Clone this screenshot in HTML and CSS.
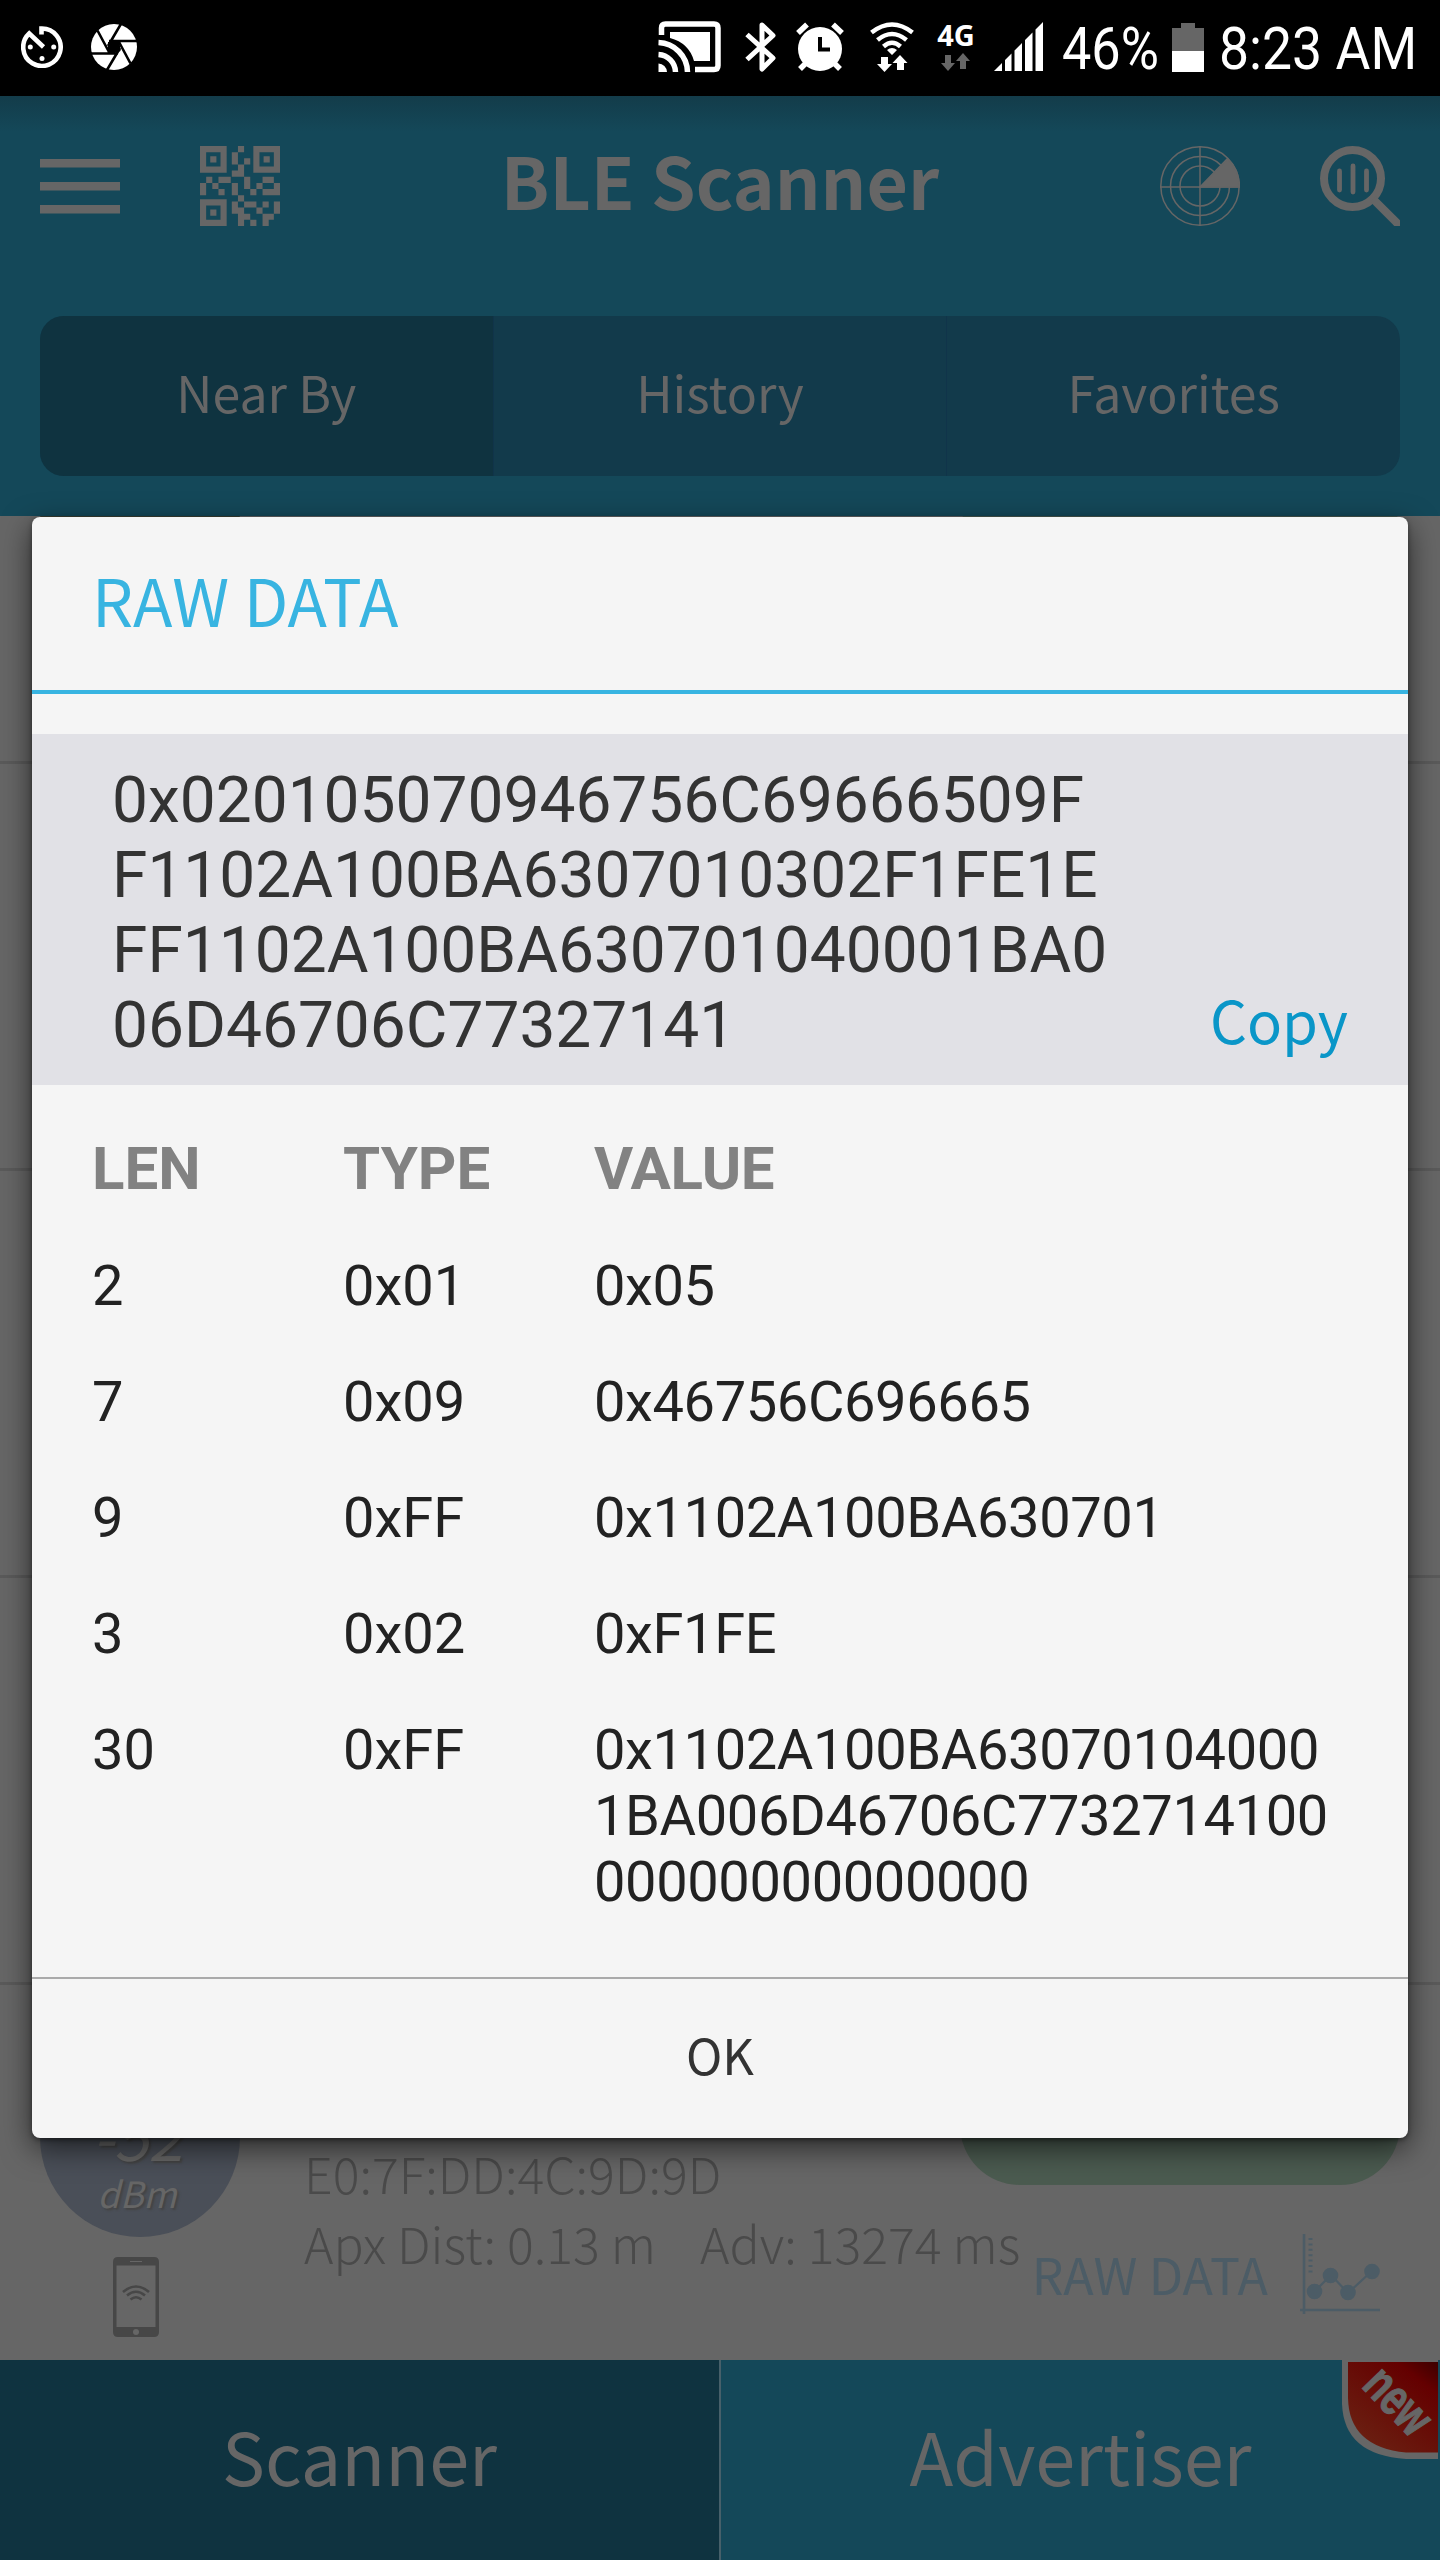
FILE: index.html
```html
<!DOCTYPE html>
<html lang="en">
<head>
  <meta charset="UTF-8" />
  <meta name="viewport" content="width=device-width, initial-scale=1" />
  <title>BLE Scanner</title>
  <link rel="stylesheet" href="styles.css">
</head>
<body>

  <div class="status-bar">
    <div class="status-left">
      <svg width="42" height="42" viewBox="0 0 42 42" fill="none" stroke="#fff">
        <path d="M20.5 8.5V2.5A18.7 18.7 0 1 1 8.2 7.5L22.5 21" stroke-width="4.6"/>
        <g fill="#fff" stroke="none"><circle cx="9.3" cy="21" r="2.5"/><circle cx="32.7" cy="21" r="2.5"/><circle cx="21" cy="32.5" r="2.5"/></g>
      </svg>
      <svg width="46" height="46" viewBox="0 0 46 46">
        <circle cx="23" cy="23" r="23" fill="#fff"/>
        <path d="M17 18L28.500 17 29.500 27 24 29 17 29z" fill="#000"/>
        <path d="M6.500 6.500L18 28M30.500-1L17 22M46 17H18M39.500 39.500L28 18M16 46L29 24M0 29.500H27" stroke="#000" stroke-width="2.6"/>
      </svg>
    </div>
    <div class="status-right">
      <svg class="cast" width="64" height="52" viewBox="0 0 64 52" fill="none" stroke="#fff" stroke-width="5.500">
        <path d="M3.500 14V7q0-4 4-4H56q4 0 4 4V44.500q0 4-4 4H37"/>
        <path d="M12 11H52V40H36Q31 22 12 17z" fill="#fff" stroke="none"/>
        <path d="M.5 21.500A30 30 0 0 1 29.500 51M.5 33.500A18 18 0 0 1 17.500 51"/>
        <path d="M.5 42.500A9 9 0 0 1 9 51H.5z" fill="#fff" stroke="none"/>
      </svg>
      <svg class="bt" width="34" height="52" viewBox="0 0 34 52" fill="none" stroke="#fff" stroke-width="5" stroke-linejoin="round">
        <path d="M3 13.500L29 37 18 48V4L29 14.500 3 38.500"/>
      </svg>
      <svg class="alarm" width="48" height="50" viewBox="0 0 48 50">
        <g stroke="#fff" stroke-width="5.500"><path d="M2 11L11 2.500M37 2.500L46 11M10 41L4 47M38 41L44 47"/></g>
        <circle cx="24" cy="27" r="22" fill="#fff"/>
        <path d="M24 15V27.500H34" fill="none" stroke="#000" stroke-width="4"/>
      </svg>
      <svg class="wifi" width="44" height="50" viewBox="0 0 44 50" fill="none" stroke="#fff" stroke-width="4.500">
        <path d="M1.500 10.500Q22-5.500 42.500 10.500M7.500 18Q22 6 36.500 18M13.500 24.500Q22 17 30.500 24.500"/>
        <path d="M17 28q5-4 10 0l-5 5zM11 35h7v7h4l-7.500 8L7 42h4zM27 48h7v-7h3.500L30 33l-7.500 8H27z" fill="#fff" stroke="none"/>
      </svg>
      <div class="network">
        <span>4G</span>
        <svg width="30" height="18" viewBox="0 0 30 18" fill="#666"><path d="M4 2h6v8h4l-7 8-7-8h4zM19 16h6V8h4l-7-8-7 8h4z"/></svg>
      </div>
      <svg class="signal" width="50" height="50" viewBox="0 0 50 50" fill="#fff">
        <path d="M0 49L8 41V49zM11 38L17.500 31.500V49H11zM20.500 28.500L28 21V49H20.500zM31 18L38.500 10.500V49H31zM41.500 7.500L49 0V49H41.500z"/>
      </svg>
      <span class="percent">46%</span>
      <svg class="battery" width="32" height="49" viewBox="0 0 32 49"><path d="M9 0H23V5H32V28H0V5H9z" fill="#666"/><path d="M0 28H32V49H0z" fill="#fff"/></svg>
      <span class="clock">8:23 AM</span>
    </div>
  </div>

  <div class="header">
    <div class="toolbar">
      <svg width="80" height="80" viewBox="0 0 80 80" fill="#666"><path d="M0 13H80V21.500H0zM0 36H80V44.500H0zM0 59H80V67.500H0z"/></svg>
      <svg class="qr" width="80" height="80" viewBox="0 0 39 39" fill="#666" fill-rule="evenodd">
        <path d="M0 0H13V13H0zM3 3V10H10V3zM5 5H8V8H5zM26 0H39V13H26zM29 3V10H36V3zM31 5H34V8H31zM0 26H13V39H0zM3 29V36H10V29zM5 31H8V34H5z"/>
        <path d="M18.500 0h3v3h-3zM15.500 3h3v6h-3zM21.500 6h3v3h-3zM18.500 9h3v6h-6v-3h3zM3 15h3v3H3zM9 15h6v3H9zM0 18h3v6H0zM6 18h3v3H6zM9 21h3v3H9zM15.500 18h3v6h-3zM21.500 15h3v6h-3zM24.500 21h3v3h-3zM27.500 18h3v3h-3zM30.500 15h5.500v3h-5.500zM36 18h3v6h-8.500v-3H36zM18.500 24h3v3h-3zM15.500 27h3v6h-3zM21.500 27h6v3h-6zM30.500 27h3v3h-3zM36 27h3v6h-3zM18.500 30h3v3h-3zM27.500 30h3v3h-3zM18.500 33h6v3h-3v3h-3zM24.500 36h3v3h-3zM30.500 33h5.500v3h-2.500v3h-3z"/>
      </svg>
      <h1>BLE Scanner</h1>
      <svg class="radar" width="80" height="80" viewBox="0 0 80 80" fill="none" stroke="#666" stroke-width="1.500">
        <circle cx="40" cy="40" r="39.200"/><circle cx="40" cy="40" r="29.500"/><circle cx="40" cy="40" r="20"/>
        <path d="M40 0V80M0 41H80"/>
        <path d="M40 41L67.500 12.500Q79.500 24 79.500 41z" fill="#666"/>
      </svg>
      <svg width="80" height="80" viewBox="0 0 80 80" fill="none" stroke="#666">
        <circle cx="32.500" cy="32.500" r="28.500" stroke-width="8"/>
        <path d="M19.500 25V44M33 20V46M46.500 25V44" stroke-width="4.800" stroke-linecap="round"/>
        <path d="M53 53L80 80" stroke-width="8"/>
      </svg>
    </div>
    <div class="tabs">
      <div class="tab active">Near By</div>
      <div class="tab">History</div>
      <div class="tab">Favorites</div>
    </div>
  </div>

  <div class="device-list">
    <div class="device cut">
      <div class="rssi near"></div>
      <div class="connect"></div>
    </div>
    <div class="device"></div>
    <div class="device"></div>
    <div class="device"></div>
    <div class="device last">
      <div class="left">
        <div class="rssi"><b>-52</b><i>dBm</i></div>
        <svg width="46" height="80" viewBox="0 0 46 80">
          <path d="M5 0H41q5 0 5 5V75q0 5-5 5H5q-5 0-5-5V5Q0 0 5 0zM3.500 8.500V70H42.500V8.500z" fill="#474747" fill-rule="evenodd"/>
          <path d="M17 4.500H29" stroke="#666"/><circle cx="23" cy="75" r="3" fill="#666"/>
          <path d="M10 35Q23 24 36 35M14 38.500Q23 31 32 38.500M17.500 42.500Q23 38 28.500 42.500" fill="none" stroke="#474747" stroke-width="2.600"/>
        </svg>
      </div>
      <div class="info">
        <div>E0:7F:DD:4C:9D:9D</div>
        <div class="dist"><span>Apx Dist: 0.13 m</span><span>Adv: 13274 ms</span></div>
      </div>
      <div class="right">
        <div class="connect"></div>
        <div class="raw">
          <span>RAW DATA</span>
          <svg width="80" height="80" viewBox="0 0 80 80" stroke="#4c5c66" fill="#4c5c66">
            <path d="M4 0V80M0 76H80" stroke-width="2.600"/>
            <path d="M10.500 4V40" stroke-width="4" stroke-dasharray="2 3.400"/>
            <path d="M15 57L31 41 48 59 72 37" fill="none" stroke-width="2.200"/>
            <g stroke="none"><circle cx="14.500" cy="57.500" r="7.800"/><circle cx="30.500" cy="41.500" r="7.800"/><circle cx="48" cy="58.500" r="7.800"/><circle cx="72" cy="37.500" r="7.800"/></g>
          </svg>
        </div>
      </div>
    </div>
  </div>

  <div class="bottom-nav">
    <div class="nav-item active">Scanner</div>
    <div class="nav-item">Advertiser
      <svg class="badge" width="97" height="100" viewBox="0 0 97 100">
        <defs>
          <linearGradient id="red" x1="1" y1="0" x2="0.300" y2="0.900">
            <stop offset="0" stop-color="#3c0000"/><stop offset="0.250" stop-color="#640000"/><stop offset="1" stop-color="#6a1d10"/>
          </linearGradient>
        </defs>
        <path d="M0 0H96V99H64Q2 95 0 44z" fill="#666"/>
        <path d="M6 2H96V92.500H64Q7 87 6 38z" fill="url(#red)"/>
        <text x="54" y="57" textLength="73" lengthAdjust="spacingAndGlyphs" transform="rotate(46 54 43)">new</text>
      </svg>
    </div>
  </div>

  <div class="dialog">
    <h2>RAW DATA</h2>
    <div class="payload">
      <p>0x020105070946756C69666509F<br>F1102A100BA6307010302F1FE1E<br>FF1102A100BA630701040001BA0<br>06D46706C77327141</p>
      <a class="copy">Copy</a>
    </div>
    <div class="records">
      <span class="th">LEN</span><span class="th">TYPE</span><span class="th">VALUE</span>
      <span>2</span><span>0x01</span><span>0x05</span>
      <span>7</span><span>0x09</span><span>0x46756C696665</span>
      <span>9</span><span>0xFF</span><span>0x1102A100BA630701</span>
      <span>3</span><span>0x02</span><span>0xF1FE</span>
      <span>30</span><span>0xFF</span><span>0x1102A100BA63070104000<br>1BA006D46706C7732714100<br>00000000000000</span>
    </div>
    <div class="ok">OK</div>
  </div>

</body>
</html>
```
FILE: styles.css
```css
* {
  box-sizing: border-box;
}

html, body {
  margin: 0; padding: 0;
}

body {
  position: relative;
  width: 1440px;
  height: 2560px;
  overflow: hidden;
  display: flex;
  flex-direction: column;
  background: #666;
  color: #666;
  font-family: 'Noto Sans CJK SC', sans-serif;
}

svg {
  display: block;
  flex-shrink: 0;
}

/* Status bar */
.status-bar {
  height: 96px;
  flex-shrink: 0;
  background: #000;
  color: #fff;
  display: flex;
  justify-content: space-between;
  padding: 0 25px 0 21px;
  font-family: Roboto, sans-serif;
}

.status-left {
  display: flex;
  align-items: center;
  gap: 28px;
  padding-bottom: 2px;
}

.status-right {
  display: flex;
  align-items: center;
  padding-bottom: 2px;
}

.bt { margin-left: 22px; }
.alarm { margin-left: 18px; }
.wifi { margin-left: 26px; }
.signal { margin-left: 18px; }
.battery { margin-left: 14px; }

.network {
  width: 40px;
  height: 48px;
  margin-left: 22px;
  display: flex;
  flex-direction: column;
  align-items: center;
  justify-content: space-between;
  font: bold 29px/24px 'Noto Sans', sans-serif;
}

.percent, .clock {
  font-size: 60px;
  line-height: 70px;
  padding-top: 3px;
  white-space: nowrap;
  transform: scaleX(0.87);
}

.percent {
  width: 96px;
  margin-left: 18px;
  transform-origin: left;
}

.clock {
  width: 196px;
  margin-left: 15px;
  transform: scaleX(0.892);
  transform-origin: left;
}

/* Header */
.header {
  height: 420px;
  flex-shrink: 0;
  padding: 50px 40px 0;
  background: linear-gradient(#133c4a, #144859 36px);
  position: relative;
  z-index: 1;
}

.toolbar {
  display: flex;
  align-items: center;
  height: 80px;
}

.qr { margin-left: 80px; }
.radar { margin-right: 80px; }

h1 {
  flex: 1;
  margin: 0;
  padding-bottom: 14px;
  text-align: center;
  font-size: 71.500px;
  line-height: 80px;
  font-weight: 700;
}

.tabs {
  display: flex;
  height: 160px;
  margin-top: 90px;
  border-radius: 24px;
  overflow: hidden;
  background: #123a4b;
}

.tab {
  flex: 1;
  text-align: center;
  font-size: 50px;
  line-height: 150px;
  border-left: 1px solid #10344a;
}

.tab.active {
  background: #0f3340;
  border-left: none;
}

/* Device list */
.device-list {
  flex: 1;
  min-height: 0;
  margin-top: -157px;
}

.device {
  height: 407px;
  border-bottom: 3px solid #5a5a5a;
}

.cut {
  height: 405px;
  padding: 52px 40px 0;
  display: flex;
  justify-content: space-between;
}

.cut .connect {
  margin-top: 28px;
}

.last {
  display: flex;
  border: none;
  height: 375px;
}

.left {
  width: 200px;
  margin: 52px 0 0 40px;
  display: flex;
  flex-direction: column;
  align-items: center;
}

.left svg {
  margin: 20px 8px 0 0;
}

.rssi {
  width: 200px;
  height: 200px;
  border-radius: 50%;
  background: #4a4f58;
  text-align: center;
  font-style: italic;
  text-shadow: 2px 2px 2px #444;
}

.rssi.near {
  background: #3c4033;
}

.rssi b {
  display: block;
  font-weight: 400;
  font-size: 62px;
  line-height: 62px;
  padding: 66px 5px 0 0;
}

.rssi i {
  display: block;
  padding-right: 6px;
  font-size: 36px;
  line-height: 54px;
}

.info {
  width: 720px;
  margin: 152px 0 0 64px;
  color: #4a4a4a;
  font-size: 50px;
  line-height: 70px;
  font-weight: 300;
  white-space: nowrap;
}

.dist {
  display: flex;
  gap: 44px;
}

.right {
  margin-top: 80px;
  margin-left: -64px;
}

.connect {
  width: 440px;
  height: 120px;
  border-radius: 60px;
  background: #4b5b50;
}

.raw {
  display: flex;
  align-items: center;
  justify-content: flex-end;
  gap: 32px;
  margin: 49px 20px 0 0;
  color: #4c5c66;
  font-size: 50px;
  line-height: 76px;
}

.raw span {
  padding-bottom: 3px;
}

/* Bottom navigation */
.bottom-nav {
  height: 200px;
  flex-shrink: 0;
  display: flex;
  position: relative;
}

.nav-item {
  flex: 1;
  text-align: center;
  font-size: 72px;
  line-height: 190px;
  background: #144859;
  position: relative;
}

.nav-item.active {
  background: #0f3340;
  border-right: 2px solid #47606a;
}

.badge {
  position: absolute;
  top: 0;
  right: 1px;
}

.badge text {
  fill: #666;
  stroke: #666;
  stroke-width: 1.2px;
  font: bold 52px/1 'Liberation Sans', sans-serif;
  text-anchor: middle;
}

/* Raw data dialog */
.dialog {
  position: absolute;
  z-index: 2;
  left: 32px;
  top: 517px;
  width: 1376px;
  height: 1621px;
  display: flex;
  flex-direction: column;
  background: #f5f5f5;
  border-radius: 8px;
  box-shadow: 0 10px 30px rgba(0,0,0,0.6), 0 2px 5px rgba(0,0,0,0.4);
  overflow: hidden;
  font-family: Roboto, sans-serif;
}

h2 {
  height: 177px;
  margin: 0;
  padding-left: 60px;
  border-bottom: 4px solid #38b4e1;
  color: #38b4e1;
  font: 400 64.800px/164px 'Noto Sans CJK SC', sans-serif;
}

.payload {
  height: 351px;
  margin-top: 40px;
  padding: 29px 60px 0 80px;
  display: flex;
  justify-content: space-between;
  align-items: flex-start;
  background: #e1e1e6;
  color: #333;
  font-size: 64px;
  line-height: 75px;
}

.payload p {
  margin: 0;
}

.copy {
  margin-top: 221px;
  color: #0a96c8;
  font: 58px/70px 'Noto Sans CJK SC', sans-serif;
}

.records {
  display: grid;
  grid-template-columns: 251px 251px auto;
  row-gap: 50px;
  padding: 50px 60px 0;
  color: #222;
  font-size: 56px;
  line-height: 66px;
}

.records span:nth-child(3n) {
  letter-spacing: -0.38px;
}

.records .th {
  color: #828282;
  font-size: 60px;
  line-height: 68px;
  font-weight: 700;
}

.ok {
  height: 161px;
  margin-top: auto;
  border-top: 2px solid #aaa;
  text-align: center;
  color: #333;
  font: 49px/150px 'Noto Sans CJK SC', sans-serif;
}
```
